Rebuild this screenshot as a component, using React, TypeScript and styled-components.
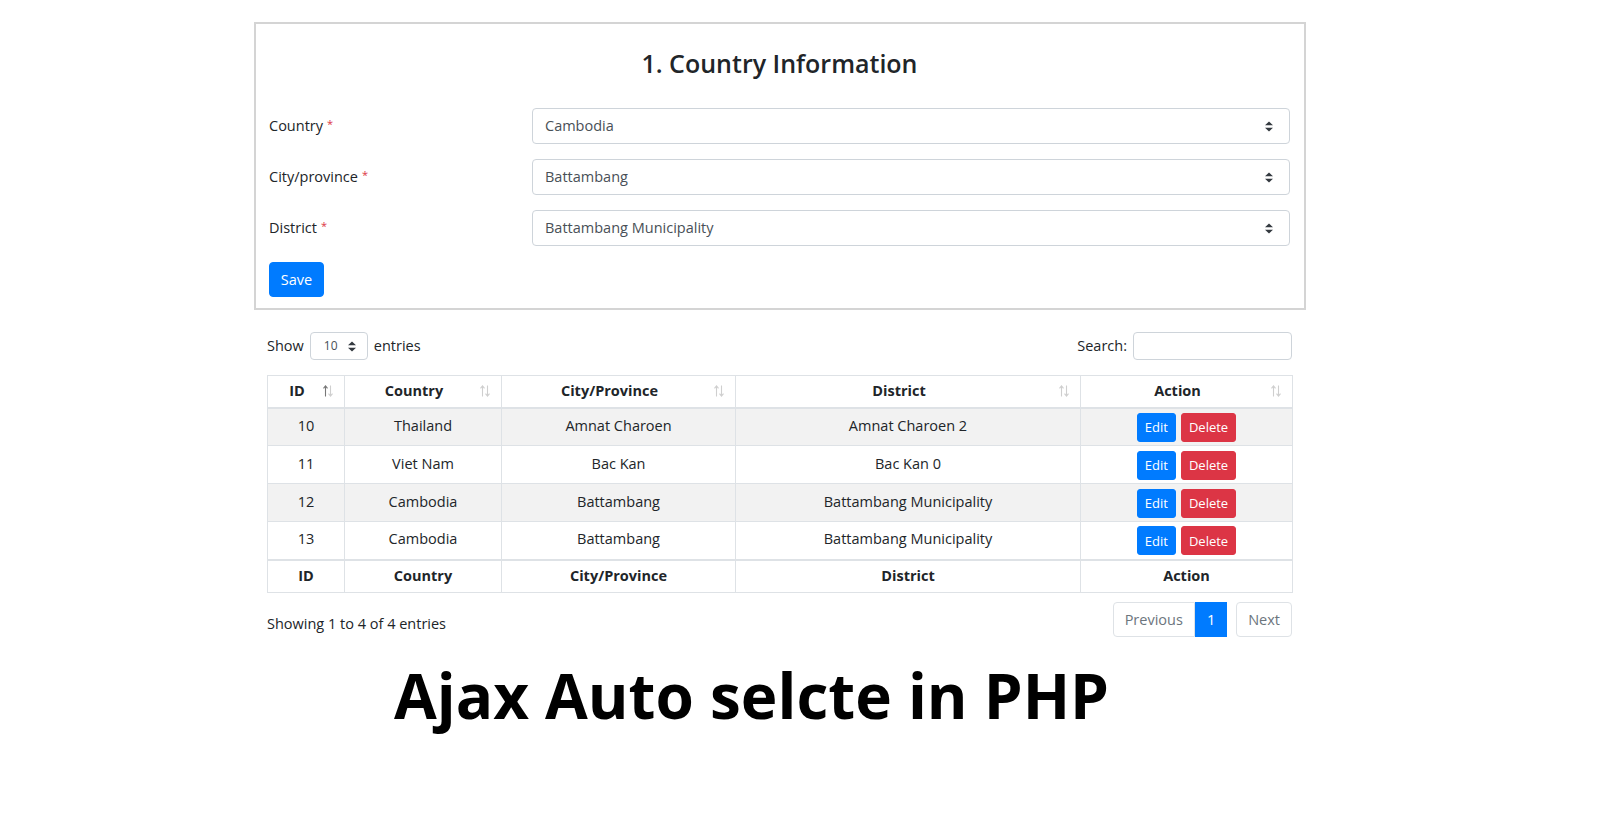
import React from 'react';
import styled, { createGlobalStyle } from 'styled-components';

const GlobalStyle = createGlobalStyle`
  html, body {
    margin: 0;
    padding: 0;
    background: #fff;
  }
  body {
    font-family: "Open Sans", "Noto Sans", sans-serif;
    font-size: 14.5px;
    line-height: 1.5;
    color: #212529;
  }
  * {
    box-sizing: border-box;
  }
`;

const Page = styled.div`
  width: 1052px;
  margin-left: 254px;
  padding-top: 22px;
`;

const Card = styled.section`
  border: 2px solid #d4d4d4;
  padding: 0 14px 11px 13px;
`;

const CardTitle = styled.h2`
  margin: 0;
  padding: 21px 0 27px;
  text-align: center;
  font-size: 25px;
  font-weight: 600;
  line-height: 36px;
  color: #212529;
`;

const FormRow = styled.div`
  display: grid;
  grid-template-columns: 263px 1fr;
  align-items: center;
  height: 36px;
  margin-bottom: 15px;
`;

const Label = styled.label`
  color: #212529;
`;

const Req = styled.span`
  color: #dc3545;
  margin-left: 4px;
  font-size: 11px;
  vertical-align: 3px;
`;

const SelectBox = styled.div<{ $small?: boolean }>`
  display: flex;
  align-items: center;
  justify-content: space-between;
  height: ${p => (p.$small ? '28px' : '36px')};
  width: ${p => (p.$small ? '58px' : 'auto')};
  padding: ${p => (p.$small ? '0 11px 0 13px' : '0 16px 0 12px')};
  border: 1px solid #ced4da;
  border-radius: 4px;
  color: #495057;
  font-size: ${p => (p.$small ? '12px' : 'inherit')};
  background: #fff;
`;

const SaveButton = styled.button`
  display: block;
  margin-top: 16px;
  width: 55px;
  height: 35px;
  border: 1px solid #007bff;
  border-radius: 4px;
  background: #007bff;
  color: #fff;
  font-family: inherit;
  font-size: 14.5px;
  padding: 0;
`;

const TableWrap = styled.div`
  margin: 0 14px 0 13px;
`;

const Toolbar = styled.div`
  display: flex;
  justify-content: space-between;
  align-items: center;
  margin-top: 22px;
  height: 28px;
`;

const Inline = styled.div`
  display: flex;
  align-items: center;
  gap: 6px;
`;

const SearchInput = styled.div`
  width: 159px;
  height: 28px;
  border: 1px solid #ced4da;
  border-radius: 4px;
`;

const Table = styled.table`
  width: 100%;
  margin-top: 15px;
  border-collapse: collapse;
  table-layout: fixed;
  border: 1px solid #dee2e6;

  tbody tr:nth-of-type(odd) {
    background: #f2f2f2;
  }
`;

const HeadCell = styled.th<{ $foot?: boolean }>`
  position: relative;
  height: ${p => (p.$foot ? '33px' : '32px')};
  padding: ${p => (p.$foot ? '0 12px' : '0 30px 0 12px')};
  border: 1px solid #dee2e6;
  border-bottom-width: ${p => (p.$foot ? '1px' : '2px')};
  border-top-width: ${p => (p.$foot ? '2px' : '1px')};
  text-align: center;
  font-weight: 700;
  vertical-align: middle;
`;

const Cell = styled.td`
  height: 38px;
  padding: 0 12px 2px;
  border: 1px solid #dee2e6;
  text-align: center;
  vertical-align: middle;
`;

const Actions = styled.div`
  display: flex;
  justify-content: center;
  gap: 5px;
  padding-top: 3px;
`;

const ActionButton = styled.button<{ $danger?: boolean }>`
  height: 29px;
  padding: 0 7px;
  border: 1px solid ${p => (p.$danger ? '#dc3545' : '#007bff')};
  background: ${p => (p.$danger ? '#dc3545' : '#007bff')};
  border-radius: 3px;
  color: #fff;
  font-family: inherit;
  font-size: 13px;
`;

const SortIcon = styled.svg`
  position: absolute;
  right: 11px;
  top: 50%;
  transform: translateY(-50%);
`;

const InfoBar = styled.div`
  display: flex;
  justify-content: space-between;
  align-items: flex-start;
  margin-top: 9px;
`;

const InfoText = styled.div`
  padding-top: 11px;
`;

const Pagination = styled.div`
  display: flex;
`;

const PageLink = styled.div<{ $active?: boolean; $first?: boolean; $apart?: boolean }>`
  display: flex;
  align-items: center;
  justify-content: center;
  height: 35px;
  padding: 0 11px;
  margin-left: ${p => (p.$apart ? '9px' : '0')};
  border: 1px solid ${p => (p.$active ? '#007bff' : '#dee2e6')};
  border-radius: ${p => (p.$first ? '4px 0 0 4px' : p.$apart ? '4px' : '0')};
  background: ${p => (p.$active ? '#007bff' : '#fff')};
  color: ${p => (p.$active ? '#fff' : '#6c757d')};
`;

const BigTitle = styled.h1`
  margin: 18px 0 0;
  padding-left: 140px;
  font-size: 62px;
  line-height: 80px;
  font-weight: 700;
  color: #000;
  white-space: nowrap;
`;

const Caret = () => (
  <svg width="8" height="11" viewBox="0 0 8 11">
    <path d="M0 4.2 L4 0.5 L8 4.2Z M0 6.8 L4 10.5 L8 6.8Z" fill="#343a40" />
  </svg>
);

const Sorter = ({ active }: { active?: boolean }) => (
  <SortIcon width="10" height="13" viewBox="0 0 10 13">
    <g fill="none" strokeWidth="1.1">
      <path d="M2.5 12V1.5 M0.5 3.8 L2.5 1.3 L4.5 3.8" stroke={active ? '#777' : '#cfcfcf'} />
      <path d="M7.5 1V11.5 M5.5 9.2 L7.5 11.7 L9.5 9.2" stroke="#cfcfcf" />
    </g>
  </SortIcon>
);

const fields = [
  { label: 'Country', value: 'Cambodia' },
  { label: 'City/province', value: 'Battambang' },
  { label: 'District', value: 'Battambang Municipality' },
];

const rows = [
  { id: 10, country: 'Thailand', city: 'Amnat Charoen', district: 'Amnat Charoen 2' },
  { id: 11, country: 'Viet Nam', city: 'Bac Kan', district: 'Bac Kan 0' },
  { id: 12, country: 'Cambodia', city: 'Battambang', district: 'Battambang Municipality' },
  { id: 13, country: 'Cambodia', city: 'Battambang', district: 'Battambang Municipality' },
];

const columns = ['ID', 'Country', 'City/Province', 'District', 'Action'];
const widths = [77, 157, 234, 345, 212];

export default function App() {
  return (
    <Page>
      <GlobalStyle />
      <Card>
        <CardTitle>1. Country Information</CardTitle>
        {fields.map(f => (
          <FormRow key={f.label}>
            <Label>
              {f.label}
              <Req>*</Req>
            </Label>
            <SelectBox>
              <span>{f.value}</span>
              <Caret />
            </SelectBox>
          </FormRow>
        ))}
        <SaveButton>Save</SaveButton>
      </Card>

      <TableWrap>
        <Toolbar>
          <Inline>
            Show
            <SelectBox $small>
              <span>10</span>
              <Caret />
            </SelectBox>
            entries
          </Inline>
          <Inline>
            Search:
            <SearchInput />
          </Inline>
        </Toolbar>

        <Table>
          <colgroup>
            {widths.map((w, i) => (
              <col key={i} style={{ width: w }} />
            ))}
          </colgroup>
          <thead>
            <tr>
              {columns.map((c, i) => (
                <HeadCell key={c}>
                  {c}
                  <Sorter active={i === 0} />
                </HeadCell>
              ))}
            </tr>
          </thead>
          <tbody>
            {rows.map(r => (
              <tr key={r.id}>
                <Cell>{r.id}</Cell>
                <Cell>{r.country}</Cell>
                <Cell>{r.city}</Cell>
                <Cell>{r.district}</Cell>
                <Cell>
                  <Actions>
                    <ActionButton>Edit</ActionButton>
                    <ActionButton $danger>Delete</ActionButton>
                  </Actions>
                </Cell>
              </tr>
            ))}
          </tbody>
          <tfoot>
            <tr>
              {columns.map(c => (
                <HeadCell key={c} $foot>
                  {c}
                </HeadCell>
              ))}
            </tr>
          </tfoot>
        </Table>

        <InfoBar>
          <InfoText>Showing 1 to 4 of 4 entries</InfoText>
          <Pagination>
            <PageLink $first>Previous</PageLink>
            <PageLink $active>1</PageLink>
            <PageLink $apart>Next</PageLink>
          </Pagination>
        </InfoBar>
      </TableWrap>

      <BigTitle>Ajax Auto selcte in PHP</BigTitle>
    </Page>
  );
}
